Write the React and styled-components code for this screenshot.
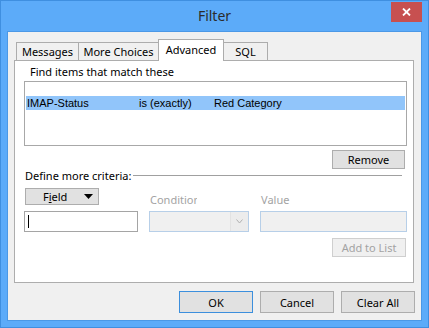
import React from "react";
import styled, { createGlobalStyle } from "styled-components";

const GlobalStyle = createGlobalStyle`
  html, body {
    margin: 0;
    padding: 0;
    background: #ffffff;
  }
  * {
    box-sizing: border-box;
  }
`;

const Window = styled.div`
  width: 429px;
  height: 328px;
  display: flex;
  flex-direction: column;
  padding: 0 6px 6px;
  background: #5cabf9;
  border: 1px solid #3f8fe0;
  font-family: "Noto Sans", "Open Sans", sans-serif;
  font-size: 11px;
  color: #000;
`;

const TitleBar = styled.div`
  height: 30px;
  display: grid;
  grid-template-columns: 1fr auto 1fr;
  align-items: start;
`;

const Title = styled.div`
  grid-column: 2;
  font-size: 14px;
  line-height: 30px;
  color: #2b2b2b;
`;

const CloseButton = styled.div`
  grid-column: 3;
  justify-self: end;
  margin-top: 1px;
  width: 31px;
  height: 20px;
  display: flex;
  align-items: center;
  justify-content: center;
  background: #c75050;
`;

const Body = styled.div`
  flex: 1;
  display: flex;
  flex-direction: column;
  padding: 7px 6px 7px 6px;
  background: #f0f0f0;
  border: 1px solid #4b98e6;
`;

const TabStrip = styled.div`
  height: 21px;
  display: flex;
  align-items: flex-end;
  padding-left: 2px;
`;

const Tab = styled.div`
  width: ${(p) => p.$w}px;
  height: ${(p) => (p.$active ? 22 : 18)}px;
  margin-left: ${(p) => (p.$first ? 0 : -1)}px;
  margin-bottom: ${(p) => (p.$active ? -1 : 0)}px;
  padding-bottom: ${(p) => (p.$active ? 3 : 0)}px;
  position: relative;
  z-index: ${(p) => (p.$active ? 2 : 1)};
  display: flex;
  align-items: center;
  justify-content: center;
  border: 1px solid #acacac;
  border-bottom: none;
  background: ${(p) => (p.$active ? "#ffffff" : "#f0f0f0")};
  white-space: nowrap;
`;

const Panel = styled.div`
  width: 400px;
  height: 223px;
  display: flex;
  flex-direction: column;
  border: 1px solid #adadad;
  background: #ffffff;
`;

const FindLabel = styled.div`
  margin: 3px 0 0 15px;
  line-height: 15px;
`;

const ListBox = styled.div`
  width: 383px;
  height: 65px;
  margin: 2px 0 0 9px;
  padding: 14px 1px 0 1px;
  border: 1px solid #a8a8a8;
`;

const ListRow = styled.div`
  height: 14px;
  display: grid;
  grid-template-columns: 112px 75px 1fr;
  padding-left: 1px;
  background: ${(p) => (p.$selected ? "#91c5fa" : "transparent")};
  font-family: "Liberation Sans", Arial, sans-serif;
  line-height: 14px;
  white-space: nowrap;
`;

const ButtonRow = styled.div`
  display: flex;
  justify-content: flex-end;
  gap: 7px;
  margin-top: ${(p) => p.$top || 0}px;
  padding-right: ${(p) => p.$right || 0}px;
`;

const Button = styled.div`
  width: ${(p) => p.$w || 74}px;
  height: ${(p) => p.$h || 22}px;
  display: flex;
  align-items: center;
  justify-content: center;
  border: 1px solid ${(p) => (p.$default ? "#3c8fdd" : p.$disabled ? "#cfcfcf" : "#adadad")};
  background: ${(p) => (p.$disabled ? "#f0f0f0" : "#e1e1e1")};
  color: ${(p) => (p.$disabled ? "#a3a3a3" : "#000")};
  white-space: nowrap;
`;

const CriteriaRow = styled.div`
  height: 13px;
  display: flex;
  align-items: center;
  margin: 0 11px 0 10px;
  line-height: 13px;
  white-space: nowrap;
`;

const Rule = styled.div`
  flex: 1;
  height: 1px;
  margin-left: 2px;
  background: #a0a0a0;
`;

const CriteriaGrid = styled.div`
  display: grid;
  grid-template-columns: 114px 100px 147px;
  grid-template-rows: 17px 21px;
  column-gap: 11px;
  row-gap: 6px;
  margin: 6px 0 0 9px;
`;

const FieldButton = styled.div`
  width: 74px;
  height: 17px;
  margin-left: 1px;
  display: flex;
  align-items: center;
  padding: 0 5px 0 17px;
  border: 1px solid #adadad;
  background: #e1e1e1;
  u {
    text-decoration: underline;
  }
  svg {
    margin-left: auto;
  }
`;

const FieldLabel = styled.div`
  align-self: end;
  width: ${(p) => p.$w || "auto"};
  margin-bottom: -2px;
  padding-left: 1px;
  line-height: 14px;
  color: #a3a3a3;
  white-space: nowrap;
  overflow: hidden;
`;

const TextInput = styled.div`
  height: 21px;
  padding: 3px 0 0 3px;
  border: 1px solid ${(p) => (p.$disabled ? "#b7cfe8" : "#a5a5a5")};
  background: ${(p) => (p.$disabled ? "#f0f0f0" : "#ffffff")};
`;

const Caret = styled.div`
  width: 1px;
  height: 13px;
  background: #000;
`;

const Combo = styled.div`
  height: 21px;
  display: flex;
  justify-content: flex-end;
  border: 1px solid #b7cfe8;
  background: #f0f0f0;
`;

const ComboArrow = styled.div`
  width: 18px;
  display: flex;
  align-items: center;
  justify-content: center;
  border-left: 1px solid #e2e2e2;
  background: #ececec;
`;

export default function App() {
  return (
    <>
      <GlobalStyle />
      <Window>
        <TitleBar>
          <Title>Filter</Title>
          <CloseButton>
            <svg width="9" height="8" viewBox="0 0 9 8">
              <path d="M1 0.5 L8 7.5 M8 0.5 L1 7.5" stroke="#ffffff" strokeWidth="1.8" />
            </svg>
          </CloseButton>
        </TitleBar>
        <Body>
          <TabStrip>
            <Tab $first $w={63}>Messages</Tab>
            <Tab $w={81}>More Choices</Tab>
            <Tab $active $w={66}>Advanced</Tab>
            <Tab $w={45}>SQL</Tab>
          </TabStrip>
          <Panel>
            <FindLabel>Find items that match these</FindLabel>
            <ListBox>
              <ListRow $selected>
                <span>IMAP-Status</span>
                <span>is (exactly)</span>
                <span>Red Category</span>
              </ListRow>
            </ListBox>
            <ButtonRow $top={4} $right={8}>
              <Button $w={73} $h={19}>Remove</Button>
            </ButtonRow>
            <CriteriaRow>
              Define more criteria:
              <Rule />
            </CriteriaRow>
            <CriteriaGrid>
              <FieldButton>
                <span>
                  F<u>i</u>eld
                </span>
                <svg width="9" height="5" viewBox="0 0 9 5">
                  <polygon points="0,0 9,0 4.5,5" fill="#000" />
                </svg>
              </FieldButton>
              <FieldLabel $w="48px">Condition</FieldLabel>
              <FieldLabel>Value</FieldLabel>
              <TextInput>
                <Caret />
              </TextInput>
              <Combo>
                <ComboArrow>
                  <svg width="7" height="5" viewBox="0 0 7 5">
                    <path d="M0.5 0.5 L3.5 4 L6.5 0.5" stroke="#b0b0b0" strokeWidth="1" fill="none" />
                  </svg>
                </ComboArrow>
              </Combo>
              <TextInput $disabled />
            </CriteriaGrid>
            <ButtonRow $top={6} $right={7}>
              <Button $w={74} $h={19} $disabled>Add to List</Button>
            </ButtonRow>
          </Panel>
          <ButtonRow $top={8}>
            <Button $default>OK</Button>
            <Button>Cancel</Button>
            <Button>Clear All</Button>
          </ButtonRow>
        </Body>
      </Window>
    </>
  );
}
